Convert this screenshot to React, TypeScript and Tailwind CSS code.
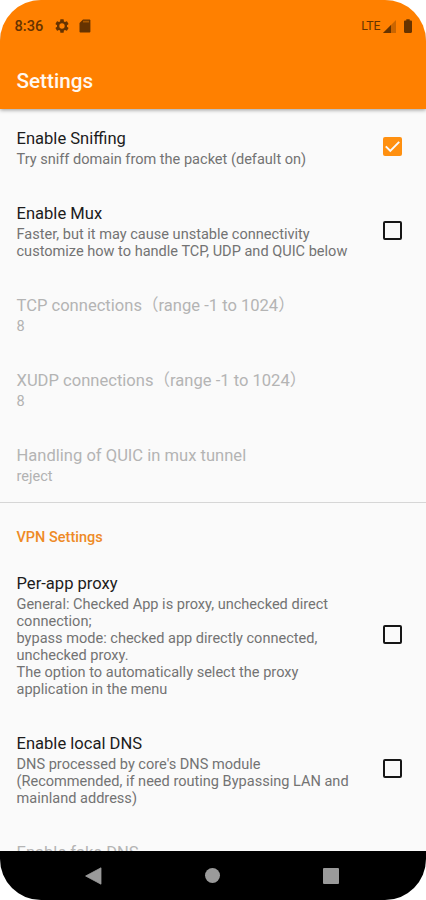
import clsx from 'clsx';

interface Preference {
  title: string;
  summary: string[];
  checked?: boolean;
  disabled?: boolean;
}

const muxPreferences: Preference[] = [
  {
    title: 'Enable Sniffing',
    summary: ['Try sniff domain from the packet (default on)'],
    checked: true,
  },
  {
    title: 'Enable Mux',
    summary: [
      'Faster, but it may cause unstable connectivity',
      'customize how to handle TCP, UDP and QUIC below',
    ],
    checked: false,
  },
  { title: 'TCP connections（range -1 to 1024）', summary: ['8'], disabled: true },
  { title: 'XUDP connections（range -1 to 1024）', summary: ['8'], disabled: true },
  { title: 'Handling of QUIC in mux tunnel', summary: ['reject'], disabled: true },
];

const vpnPreferences: Preference[] = [
  {
    title: 'Per-app proxy',
    summary: [
      'General: Checked App is proxy, unchecked direct',
      'connection;',
      'bypass mode: checked app directly connected,',
      'unchecked proxy.',
      'The option to automatically select the proxy',
      'application in the menu',
    ],
    checked: false,
  },
  {
    title: 'Enable local DNS',
    summary: [
      "DNS processed by core's DNS module",
      '(Recommended, if need routing Bypassing LAN and',
      'mainland address)',
    ],
    checked: false,
  },
  { title: 'Enable fake DNS', summary: [], disabled: true },
];

function StatusBar() {
  return (
    <div className="flex h-[50px] items-center pt-[2px] pr-[14.5px] pl-[14.5px] text-[#663300]">
      <span className="w-[30px] pt-px text-[14.6px] leading-none font-medium">8:36</span>
      <svg viewBox="0 0 24 24" className="ml-[9px] size-[16px]" fill="currentColor">
        <path
          fillRule="evenodd"
          d="M19.43 12.98c.04-.32.07-.64.07-.98s-.03-.66-.07-.98l2.11-1.65c.19-.15.24-.42.12-.64l-2-3.46c-.12-.22-.39-.3-.61-.22l-2.49 1c-.52-.4-1.08-.73-1.69-.98l-.38-2.65A.49.49 0 0 0 14 2h-4c-.25 0-.46.18-.49.42l-.38 2.65c-.61.25-1.17.59-1.69.98l-2.49-1c-.23-.09-.49 0-.61.22l-2 3.46c-.13.22-.07.49.12.64l2.11 1.65c-.04.32-.07.65-.07.98s.03.66.07.98l-2.11 1.65c-.19.15-.24.42-.12.64l2 3.46c.12.22.39.3.61.22l2.49-1c.52.4 1.08.73 1.69.98l.38 2.65c.03.24.24.42.49.42h4c.25 0 .46-.18.49-.42l.38-2.65c.61-.25 1.17-.59 1.69-.98l2.49 1c.23.09.49 0 .61-.22l2-3.46c.12-.22.07-.49-.12-.64zM12 16a4 4 0 1 1 0-8 4 4 0 0 1 0 8z"
        />
      </svg>
      <svg viewBox="0 0 12 14" className="ml-[9px] h-[14px] w-[12px]" fill="currentColor">
        <path d="M4 .4h6.2c.7 0 1.2.5 1.2 1.2v10.8c0 .7-.5 1.2-1.2 1.2H1.7c-.7 0-1.2-.5-1.2-1.2V4z" />
        <path d="M4 1.8h6v1.6H4z" fill="#a85800" />
      </svg>
      <span className="ml-auto text-[12.3px] leading-none">LTE</span>
      <svg viewBox="0 0 13 13" className="ml-[2px] size-[13px]" fill="currentColor">
        <path d="M13 0v13H0z" opacity="0.35" />
        <path d="M8 5v8H0z" />
      </svg>
      <svg viewBox="0 0 8 14" className="ml-[8px] h-[14px] w-[8px]" fill="currentColor">
        <path d="M2.3.3h3.4v1.2h1.1c.7 0 1.2.5 1.2 1.1v10.2c0 .7-.5 1.1-1.2 1.1H1.2c-.7 0-1.2-.5-1.2-1.1V2.6c0-.6.5-1.1 1.2-1.1h1.1z" />
      </svg>
    </div>
  );
}

function Checkbox({ checked }: { checked: boolean }) {
  return (
    <div
      className={clsx(
        'mb-[3px] flex size-[19px] shrink-0 items-center justify-center rounded-[2px]',
        checked ? 'bg-[#ff9010]' : 'border-2 border-[#161616]',
      )}
    >
      {checked && (
        <svg viewBox="0 0 19 19" className="size-[19px]" fill="none" stroke="#fafafa" strokeWidth="2">
          <path d="M2.8 9.4l4.5 4.5 8.9-9" />
        </svg>
      )}
    </div>
  );
}

function PreferenceRow({ title, summary, checked, disabled }: Preference) {
  return (
    <div className="flex shrink-0 items-center justify-between pt-[17.5px] pr-[24px] pb-[16.5px] pl-[16.5px]">
      <div>
        <div
          className={clsx(
            'text-[16.57px] leading-[22px] whitespace-nowrap',
            disabled ? 'text-[#b4b4b4]' : 'text-[#1c1c1c]',
          )}
        >
          {title}
        </div>
        <div
          className={clsx(
            'pt-[1.5px] pb-[0.5px] text-[14.55px] leading-[17px]',
            disabled ? 'text-[#b2b2b2]' : 'text-[#737373]',
          )}
        >
          {summary.map((line) => (
            <div key={line} className="whitespace-nowrap">
              {line}
            </div>
          ))}
        </div>
      </div>
      {checked !== undefined && <Checkbox checked={checked} />}
    </div>
  );
}

function NavigationBar() {
  return (
    <div className="flex h-[49px] shrink-0 items-center justify-center bg-black pr-[2px] text-[#9a9a9a]">
      <svg viewBox="0 0 17 18" className="h-[18px] w-[17px]" fill="currentColor">
        <path d="M16 .8v16.4L.6 9z" stroke="currentColor" strokeWidth="0.8" strokeLinejoin="round" />
      </svg>
      <div className="ml-[103px] size-[15px] rounded-full bg-[#9a9a9a]" />
      <div className="ml-[103px] size-[16px] rounded-[1px] bg-[#9a9a9a]" />
    </div>
  );
}

export default function App() {
  return (
    <div className="h-[900px] w-[426px] bg-white">
      <div className="flex h-full flex-col overflow-hidden rounded-[41px] bg-[#fafafa] font-['Roboto','Noto_Sans_CJK_SC',sans-serif]">
        <header className="z-10 h-[109px] shrink-0 bg-[#ff8000] shadow-[0_1px_4px_rgba(0,0,0,0.4)]">
          <StatusBar />
          <h1 className="pt-[17px] pl-[16.5px] text-[20.7px] leading-[28px] font-medium text-[#fff8f0]">
            Settings
          </h1>
        </header>
        <main className="flex min-h-0 flex-1 flex-col overflow-hidden pt-px">
          <section className="shrink-0">
            {muxPreferences.map((preference) => (
              <PreferenceRow key={preference.title} {...preference} />
            ))}
          </section>
          <section className="shrink-0 border-t border-[#d6d6d6]">
            <h2 className="pt-[25px] pb-[8px] pl-[16.5px] text-[14.5px] leading-[19px] font-medium text-[#ee8a26]">
              VPN Settings
            </h2>
            {vpnPreferences.map((preference) => (
              <PreferenceRow key={preference.title} {...preference} />
            ))}
          </section>
        </main>
        <NavigationBar />
      </div>
    </div>
  );
}
